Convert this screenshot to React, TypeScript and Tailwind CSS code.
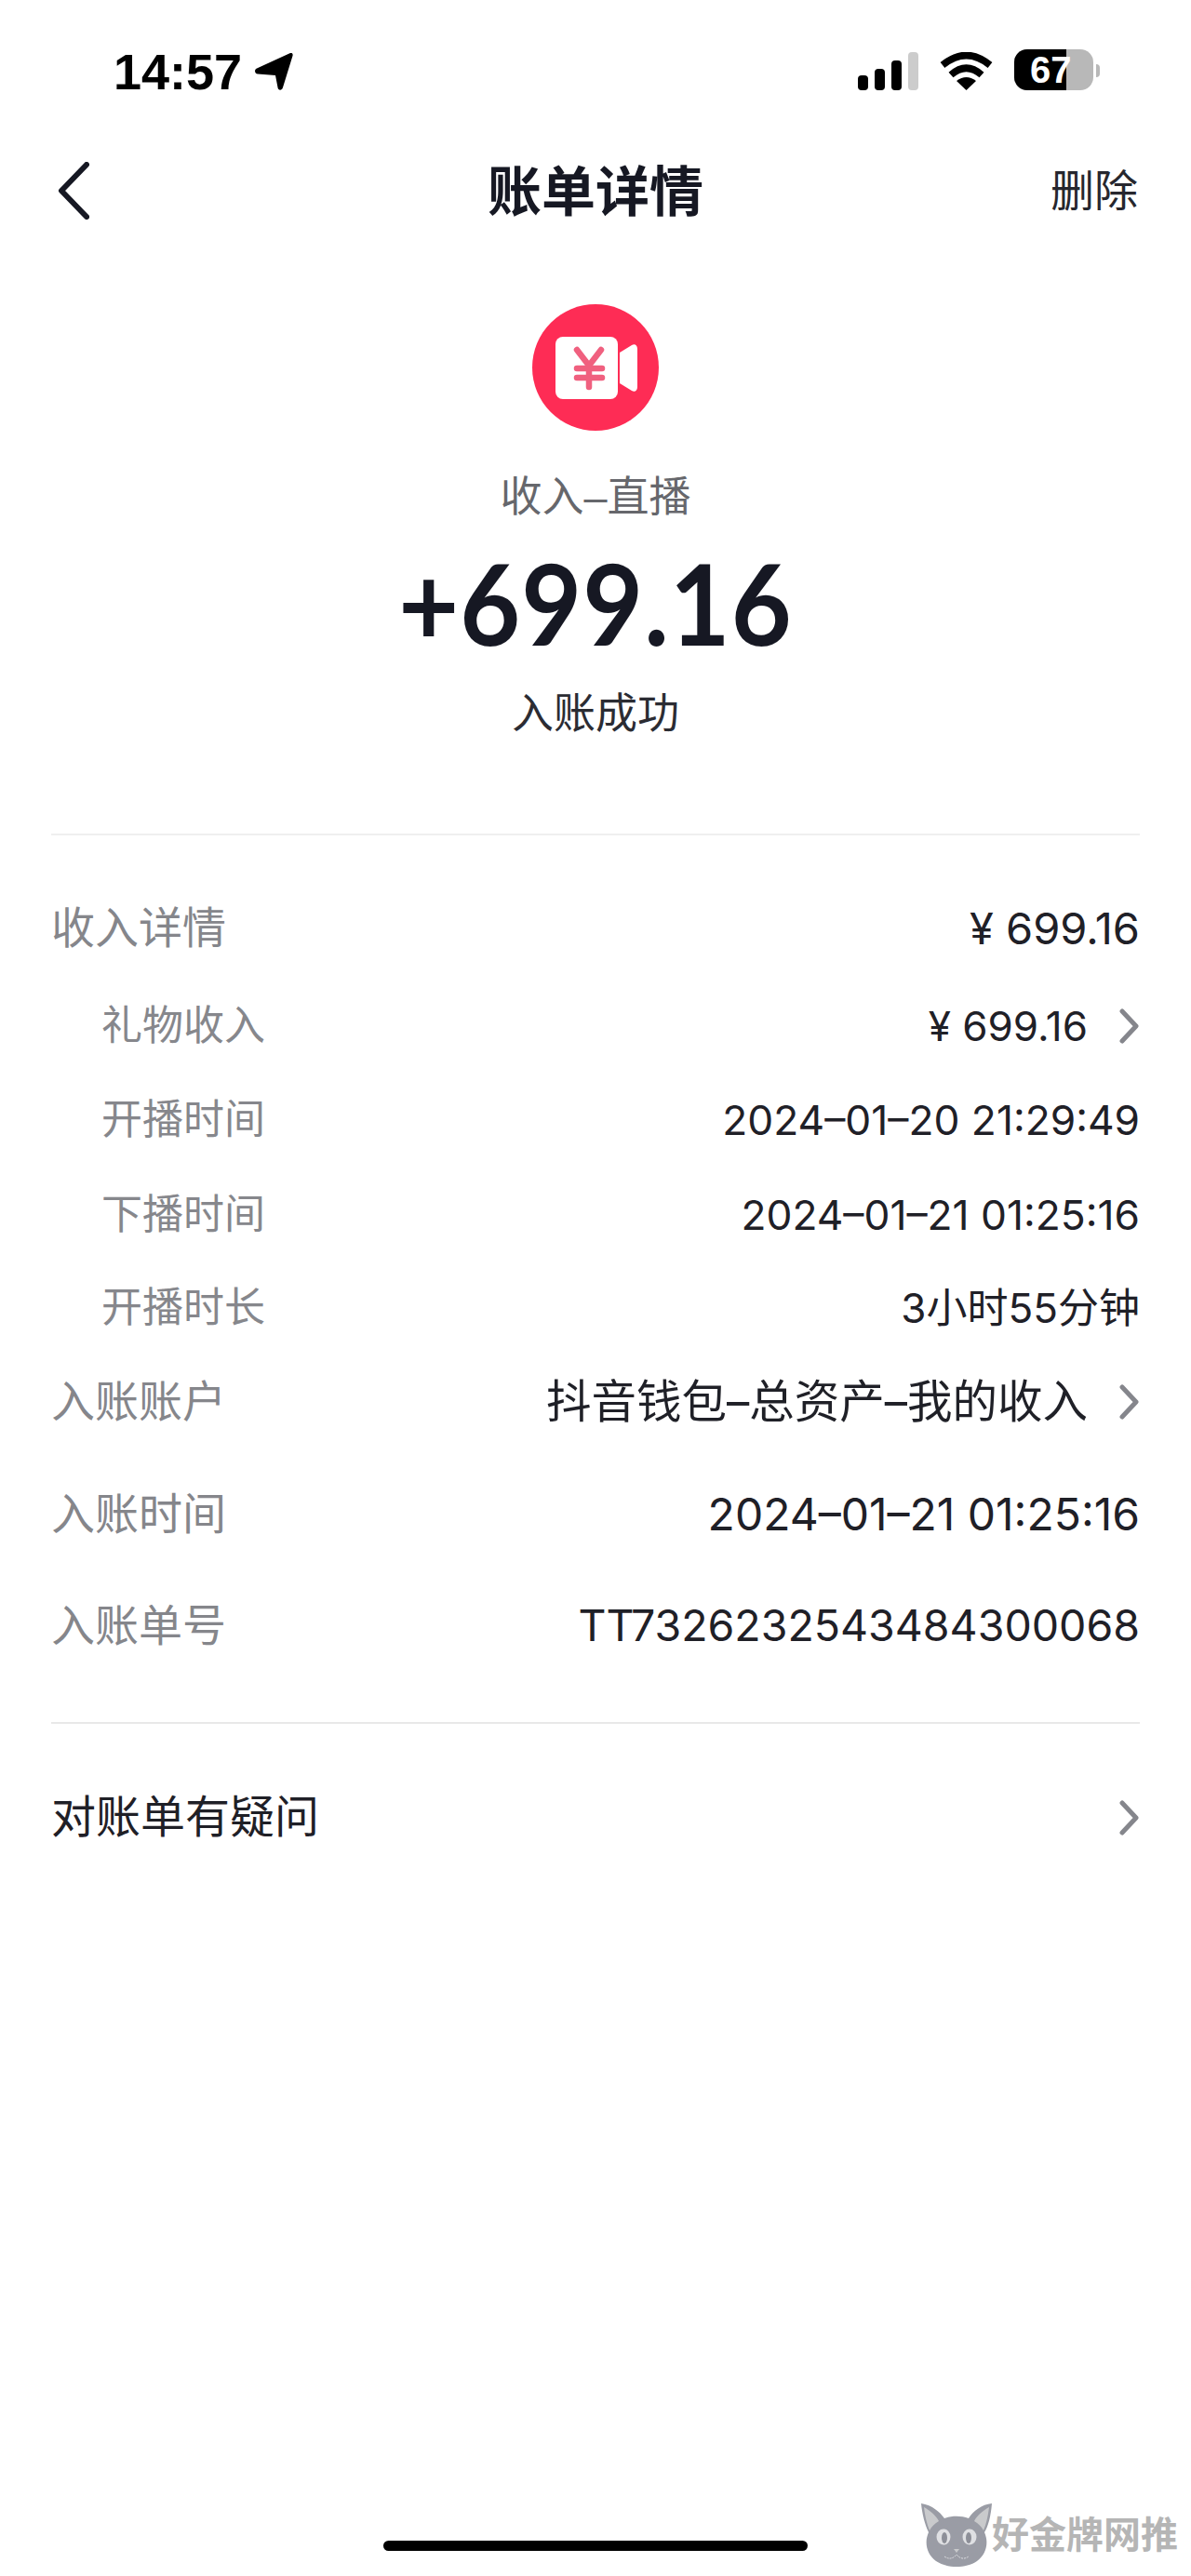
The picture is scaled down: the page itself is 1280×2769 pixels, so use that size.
import React from "react";

const sans = "[font-family:'Liberation_Sans','Noto_Sans_CJK_SC',sans-serif]";
const nums = "[font-family:Inter,'Noto_Sans_CJK_SC',sans-serif]";

const Chevron = ({className}: {className?: string}) => (
  <svg viewBox="0 0 23 38" className={`w-[23px] h-[38px] ${className ?? ""}`} fill="none" stroke="#85868c" strokeWidth="5" strokeLinecap="round" strokeLinejoin="round">
    <path d="M4 3 L19 19 L4 35" />
  </svg>
);

interface RowProps {
  label: string;
  value: string;
  sub?: boolean;
  arrow?: boolean;
  margin: string;
  size: string;
}

const Row = ({label, value, sub, arrow, margin, size}: RowProps) => (
  <div className={`flex items-center justify-between h-[100px] ${margin}`}>
    <span className={sub ? "pl-[54px] text-[44px] text-[#86878c]" : "text-[47px] text-[#85868b]"}>{label}</span>
    <div className="flex items-center">
      <span className={`${size} ${nums} text-[#1f2027]`}>{value}</span>
      {arrow && <Chevron className="ml-[33px]" />}
    </div>
  </div>
);

const rows: RowProps[] = [
  {label: "收入详情", value: "¥ 699.16", size: "text-[47px]", margin: "mt-[50px]"},
  {label: "礼物收入", value: "¥ 699.16", size: "text-[44px]", sub: true, arrow: true, margin: "mt-[5px]"},
  {label: "开播时间", value: "2024–01–20 21:29:49", size: "text-[44.3px]", sub: true, margin: "mt-[1px]"},
  {label: "下播时间", value: "2024–01–21 01:25:16", size: "text-[44.3px]", sub: true, margin: "mt-[2px]"},
  {label: "开播时长", value: "3小时55分钟", size: "text-[44px]", sub: true, margin: "mt-0"},
  {label: "入账账户", value: "抖音钱包–总资产–我的收入", size: "text-[48.5px]", arrow: true, margin: "mt-[1px]"},
  {label: "入账时间", value: "2024–01–21 01:25:16", size: "text-[48px]", margin: "mt-[21px]"},
  {label: "入账单号", value: "TT7326232543484300068", size: "text-[46.5px]", margin: "mt-[20px]"},
];

const StatusIcons = () => (
  <div className="flex items-end h-[44px] mt-[53px]">
    <div className="flex items-end gap-[7px]">
      <div className="w-[11px] h-[16px] rounded-[4px] bg-black" />
      <div className="w-[11px] h-[23px] rounded-[4px] bg-black" />
      <div className="w-[11px] h-[32px] rounded-[4px] bg-black" />
      <div className="w-[11px] h-[41px] rounded-[4px] bg-[#cccccc]" />
    </div>
    <svg viewBox="0 0 57 41" className="w-[57px] h-[41px] ml-[23px]" fill="none" stroke="#000" strokeWidth="7.5">
      <path d="M3 14 Q28.5 -7 54 14" />
      <path d="M12 24.5 Q28.5 10 45 24.5" />
      <path d="M28.5 41 L18 31 Q28.5 23 39 31 Z" fill="#000" stroke="none" />
    </svg>
    <div className="relative flex w-[85px] h-[44px] ml-[23px] rounded-[14px] overflow-hidden bg-[#b8b8b8]">
      <div className="w-[56px] h-full bg-black" />
      <span className="absolute left-[17px] top-0 leading-[44px] text-[40px] font-bold text-white">67</span>
    </div>
    <div className="w-[4px] h-[14px] mb-[14px] ml-[3px] rounded-r-full bg-[#b8b8b8]" />
  </div>
);

const App = (): JSX.Element => {
  return (
    <div className={`relative flex flex-col w-full min-h-[2769px] bg-white text-[#161823] ${sans}`}>
      {/* status bar */}
      <div className="flex justify-between h-[153px] pl-[122px] pr-[98px]">
        <div className="flex items-center h-[153px]">
          <span className="text-[54px] font-bold text-black leading-none">14:57</span>
          <svg viewBox="0 0 41 40" className="w-[41px] h-[40px] ml-[14px]" fill="#000">
            <path d="M38 0 C40 -0.5 41 1 40.5 3 L30 37 C29 40.5 25 40.5 24.5 37 L22 24 L3 22.5 C-0.5 22 -1 18 2 16.5 Z" />
          </svg>
        </div>
        <StatusIcons />
      </div>

      {/* nav */}
      <div className="relative flex items-center justify-between h-[104px] pl-[62px] pr-[57px]">
        <svg viewBox="0 0 34 62" className="w-[34px] h-[62px]" fill="none" stroke="#161823" strokeWidth="6" strokeLinecap="round" strokeLinejoin="round">
          <path d="M31 3 L4 31 L31 59" />
        </svg>
        <span className="absolute left-0 right-0 top-[25px] text-center text-[58px] font-bold leading-none">账单详情</span>
        <span className="text-[47px] leading-none text-[#26272e]">删除</span>
      </div>

      {/* hero */}
      <div className="flex flex-col items-center">
        <div className="w-[136px] h-[136px] mt-[70px] rounded-full bg-[#fe2c55] flex items-center justify-center">
          <svg viewBox="0 0 136 136" className="w-[136px] h-[136px]">
            <rect x="25" y="35" width="67" height="67" rx="8" fill="#fff" />
            <path d="M94 52 L107 44 C110 42 113 44 113 48 L113 89 C113 93 110 95 107 93 L94 85 Z" fill="#fff" />
            <g fill="none" stroke="#f0607f" strokeWidth="6.5" strokeLinecap="round">
              <path d="M48 49 L61 66 L74 49" />
              <path d="M61 66 L61 89" />
              <path d="M48 69 L75 69" />
              <path d="M48 79 L75 79" />
            </g>
          </svg>
        </div>
        <div className="mt-[42px] text-[45px] leading-[60px] text-[#66676c]">收入–直播</div>
        <div className="mt-[23px] text-[112px] leading-[120px] font-bold tracking-[1px] scale-y-[1.08] [font-family:Lato,sans-serif]">+699.16</div>
        <div className="mt-[30px] text-[45px] leading-[60px] text-[#2b2c33]">入账成功</div>
      </div>

      {/* details */}
      <div className="mx-[55px] mt-[98px]">
        <div className="h-[2px] bg-[#efefef]" />
        {rows.map((row) => (
          <Row key={row.label} {...row} />
        ))}
        <div className="h-[2px] mt-[53px] bg-[#e8e8e8]" />
        <div className="flex items-center justify-between h-[100px] mt-[51px]">
          <span className="text-[48px] text-[#1f2027]">对账单有疑问</span>
          <Chevron />
        </div>
      </div>

      {/* home indicator */}
      <div className="mt-auto mb-[27px] self-center w-[456px] h-[11px] rounded-full bg-black" />

      {/* watermark */}
      <div className="absolute right-[14px] bottom-[9px] flex items-center">
        <svg viewBox="0 0 80 70" className="w-[80px] h-[70px]">
          <path d="M2 1 C14 3 22 10 27 17 C35 14 45 14 53 17 C58 9 67 2 78 1 C77 14 74 26 70 32 C75 43 72 56 62 63 C50 71 30 71 18 63 C8 56 5 43 10 32 C6 24 3 12 2 1 Z" fill="#9a9ca5" />
          <path d="M5 5 C12 9 18 14 21 20 C16 23 13 26 11 30 C8 23 6 14 5 5 Z" fill="#c9cacc" />
          <path d="M75 5 C68 9 62 14 59 20 C64 23 67 26 69 30 C72 23 74 14 75 5 Z" fill="#c9cacc" />
          <ellipse cx="26" cy="37" rx="7.5" ry="8.5" fill="#dfe0e3" />
          <ellipse cx="54" cy="37" rx="7.5" ry="8.5" fill="#dfe0e3" />
          <ellipse cx="27" cy="38" rx="3" ry="6" fill="#8d8f98" />
          <ellipse cx="53" cy="38" rx="3" ry="6" fill="#8d8f98" />
          <path d="M37 50 L43 50 L40 54 Z" fill="#c9cacc" />
          <path d="M27 58 Q34 63 40 56 Q46 63 53 58" fill="none" stroke="#dfe0e3" strokeWidth="1" strokeDasharray="2 1" />
        </svg>
        <span className="text-[40px] font-bold leading-none text-[#b5b5b5] ml-[-2px]">好金牌网推</span>
      </div>
    </div>
  );
};

export default App;
